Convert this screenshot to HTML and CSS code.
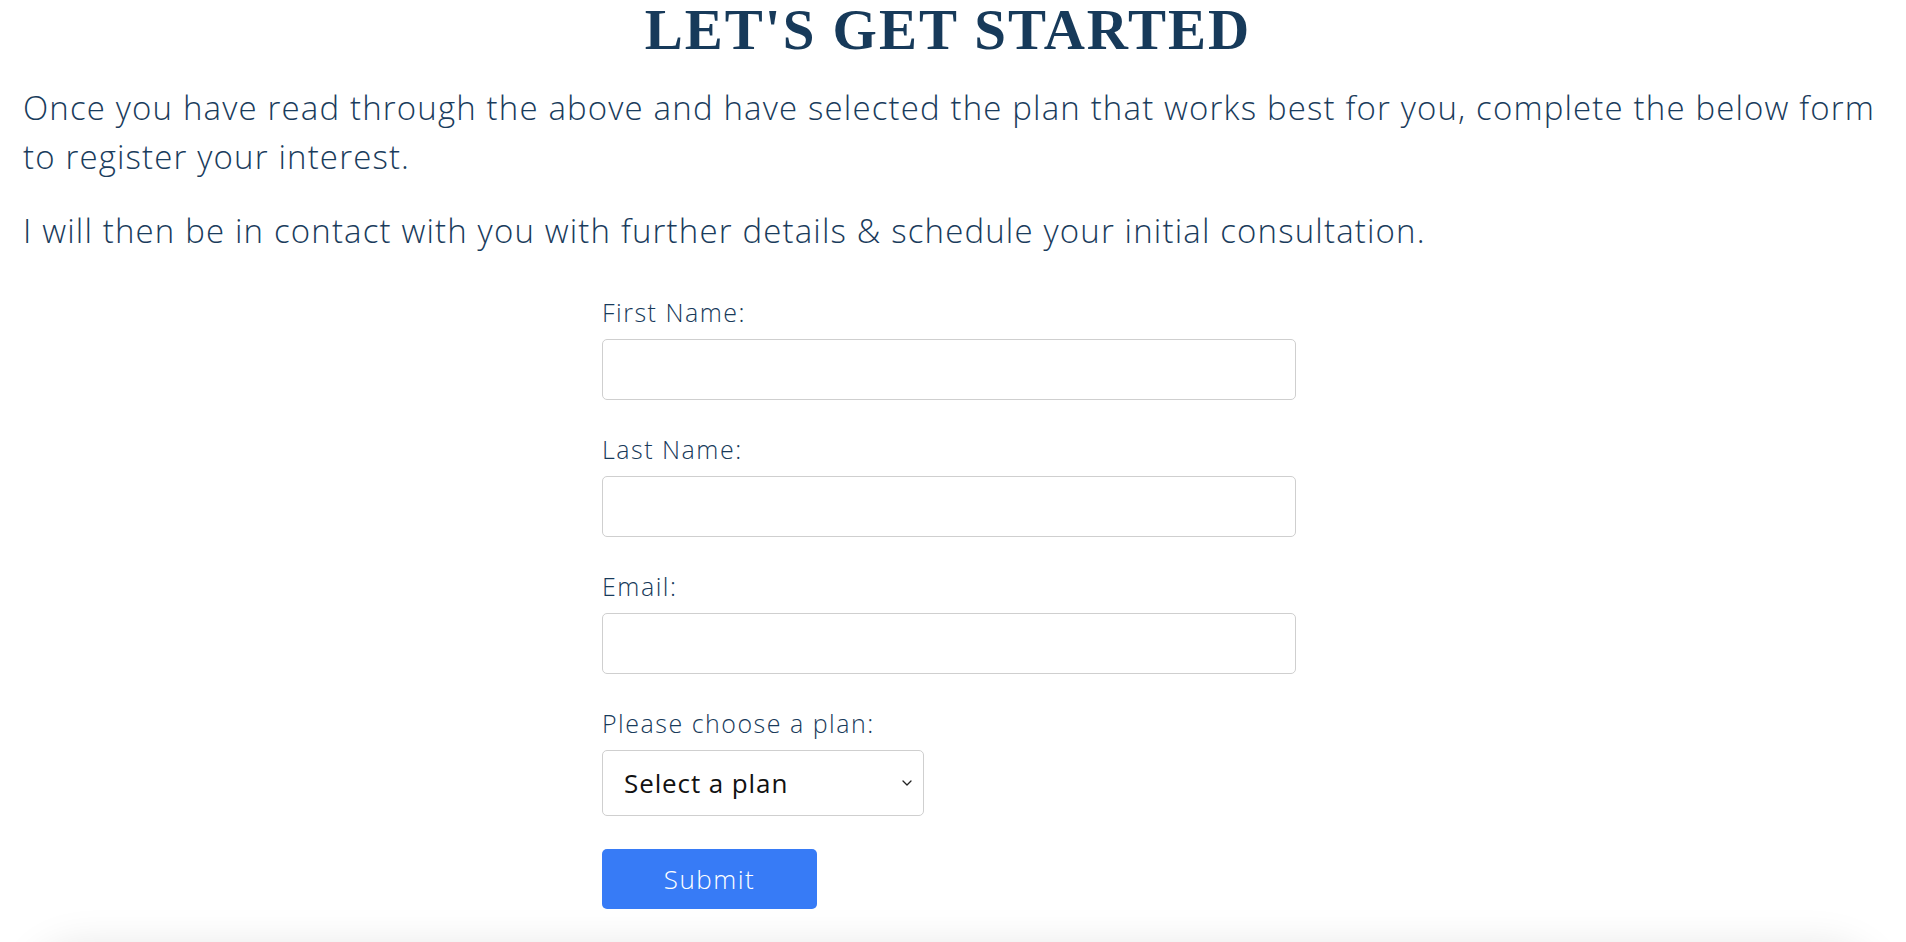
FILE: index.html
```html
<!DOCTYPE html>
<html lang="en">
<head>
<meta charset="utf-8">
<title>Let's Get Started</title>
<link rel="stylesheet" href="styles.css">
</head>
<body>
<main class="page">
  <h1 class="title">LET'S GET STARTED</h1>
  <p class="intro">Once you have read through the above and have selected the plan that works best for you, complete the below form to register your interest.</p>
  <p class="intro intro-last">I will then be in contact with you with further details &amp; schedule your initial consultation.</p>

  <form class="form">
    <div class="field">
      <label class="label" for="first">First Name:</label>
      <input class="input" id="first" type="text">
    </div>
    <div class="field">
      <label class="label" for="last">Last Name:</label>
      <input class="input" id="last" type="text">
    </div>
    <div class="field">
      <label class="label" for="email">Email:</label>
      <input class="input" id="email" type="email">
    </div>
    <div class="field field-plan">
      <label class="label" for="plan">Please choose a plan:</label>
      <div class="select-wrap">
        <select class="select" id="plan">
          <option>Select a plan</option>
        </select>
        <svg class="chevron" width="10" height="6" viewBox="0 0 10 6" aria-hidden="true"><path d="M1 1l4 4 4-4" fill="none" stroke="#222" stroke-width="1.3" stroke-linecap="round" stroke-linejoin="round"/></svg>
      </div>
    </div>
    <button class="submit" type="button">Submit</button>
  </form>
</main>
<footer class="footer"></footer>
</body>
</html>
```
FILE: styles.css
```css
html, body {
  margin: 0;
  padding: 0;
  background: #ffffff;
  overflow: hidden;
}

body {
  font-family: "Open Sans", "Liberation Sans", sans-serif;
  color: #1a3c5c;
}

.page {
  padding: 0 23px;
}

.title {
  margin: 0;
  padding-right: 10px;
  font-family: "Liberation Serif", "Times New Roman", serif;
  font-weight: 700;
  font-size: 57px;
  line-height: 60px;
  letter-spacing: 2px;
  text-align: center;
  color: #173a5a;
}

.intro {
  margin: 23px 0 0;
  font-size: 33px;
  font-weight: 300;
  line-height: 49px;
  letter-spacing: 1.15px;
}

.intro-last {
  margin-top: 25px;
}

.form {
  width: 694px;
  margin: 43px 0 0 calc(50% - 351px);
  display: flex;
  flex-direction: column;
  align-items: flex-start;
}

.field {
  width: 100%;
  display: flex;
  flex-direction: column;
  margin-bottom: 35px;
}

.field-plan {
  margin-bottom: 33px;
}

.label {
  font-size: 25px;
  font-weight: 300;
  line-height: 29px;
  letter-spacing: 1.5px;
  margin-bottom: 12px;
  color: #183a5a;
}

.input {
  box-sizing: border-box;
  width: 100%;
  height: 61px;
  border: 1px solid #cfcfcf;
  border-radius: 5px;
  background: #fff;
  font: inherit;
  outline: none;
}

.select-wrap {
  position: relative;
  width: 322px;
}

.select {
  box-sizing: border-box;
  width: 322px;
  height: 66px;
  padding: 0 21px;
  border: 1px solid #cfcfcf;
  border-radius: 5px;
  background: #fff;
  font-family: "Open Sans", "Liberation Sans", sans-serif;
  font-size: 26px;
  font-weight: 400;
  letter-spacing: 0.9px;
  color: #111;
  appearance: none;
  -webkit-appearance: none;
  outline: none;
}

.chevron {
  position: absolute;
  right: 12px;
  top: 30px;
}

.submit {
  width: 215px;
  height: 60px;
  border: none;
  border-radius: 5px;
  background: #377bf6;
  color: #fff;
  font-family: "Open Sans", "Liberation Sans", sans-serif;
  font-size: 26px;
  font-weight: 300;
  letter-spacing: 1.5px;
  cursor: pointer;
}

.footer {
  height: 200px;
  margin: 36px 24px 0;
  border-radius: 60px;
  background: #fff;
  box-shadow: 0 0 40px rgba(0, 0, 0, 0.10);
}
```
